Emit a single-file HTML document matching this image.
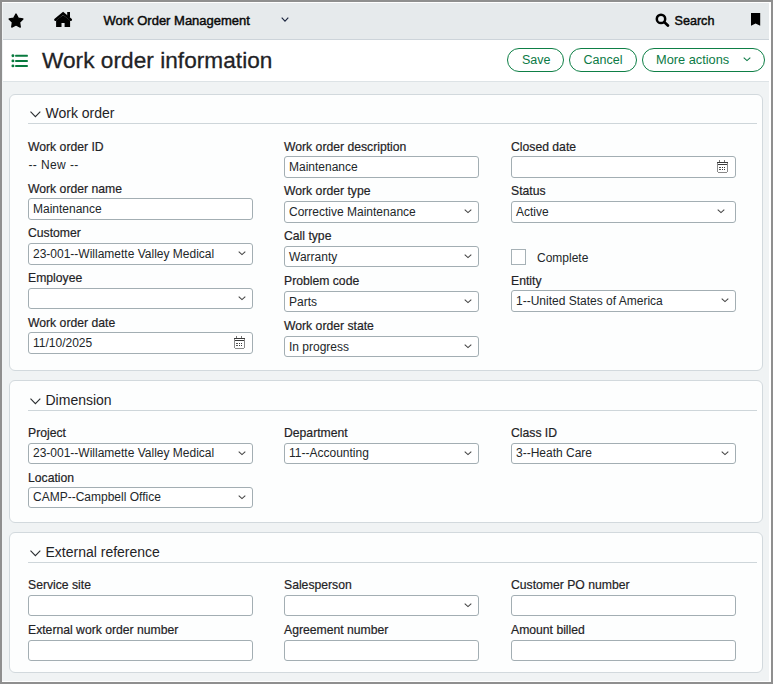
<!DOCTYPE html>
<html><head><meta charset="utf-8">
<style>
*{box-sizing:border-box;margin:0;padding:0}
html,body{width:773px;height:684px;overflow:hidden;background:#8f8f8f;font-family:"Liberation Sans",sans-serif;color:#1f2326}
body{position:relative}
.a{position:absolute;white-space:nowrap}
.lbl{line-height:1.149;-webkit-text-stroke:0.2px #1f2326;color:#1f2326}
.val{line-height:1.149;color:#22272a}
.hd{line-height:1.149;color:#1f2326}
.hdb{line-height:1.149;color:#0a0a0a;-webkit-text-stroke:0.45px #0a0a0a}
.inp{position:absolute;border:1px solid #a3aeb3;border-radius:3px;background:#fff}
.card{position:absolute;background:#fdfefe;border:1px solid #d2d9dd;border-radius:6px}
.rule{position:absolute;height:1px;background:#ced6da}
.btn{position:absolute;border:1.5px solid #0e7f46;border-radius:13px;background:#fff}
.bt{line-height:1.149;color:#0b7a45}
</style></head><body>

<div class="a" style="left:2px;top:2px;width:769px;height:680px;background:#fff"></div>
<div class="a" style="left:3px;top:3px;width:766px;height:678px;background:#f0f3f4"></div>
<div class="a" style="left:2px;top:3px;width:1px;height:678px;background:#f1f4f5"></div>
<div class="a" style="left:3px;top:3px;width:766px;height:36px;background:#e6eaec"></div>
<div class="a" style="left:3px;top:39px;width:766px;height:1px;background:#cdd4da"></div>
<div class="a" style="left:3px;top:40px;width:766px;height:41px;background:#fff"></div>
<div class="a" style="left:3px;top:81px;width:766px;height:1px;background:#dde3e6"></div>
<svg class="a" style="left:0;top:0" width="40" height="40" viewBox="0 0 40 40"><polygon points="16.00,14.00 18.20,18.17 22.85,18.98 19.57,22.36 20.23,27.02 16.00,24.95 11.77,27.02 12.43,22.36 9.15,18.98 13.80,18.17" fill="#000" stroke="#000" stroke-width="1.4" stroke-linejoin="round"/></svg>
<svg class="a" style="left:53px;top:11px" width="20" height="17" viewBox="0 0 20 17"><rect x="14.2" y="1" width="2.8" height="5.5" fill="#000"/><path d="M2.4 8.7 L10.1 2.3 L17.8 8.7" fill="none" stroke="#000" stroke-width="2.5" stroke-linecap="round" stroke-linejoin="miter"/><path d="M3.1 9.5 L10.1 4.1 L17.1 9.5 V16 H11.6 V11.9 H8.5 V16 H3.1 Z" fill="#000"/></svg>
<div class="a hdb" style="left:103.5px;top:14.04px;font-size:13px">Work Order Management</div>
<svg class="a" style="left:280.5px;top:16.6px" width="9" height="6" viewBox="0 0 9 6"><path d="M0.7 0.7 L4 4.1 L7.3 0.7" fill="none" stroke="#1c2640" stroke-width="1.15"/></svg>
<svg class="a" style="left:655px;top:12.8px" width="15" height="14" viewBox="0 0 15 14"><circle cx="6" cy="5.9" r="4.2" fill="none" stroke="#000" stroke-width="2.5"/><path d="M9.2 9.1 L12.9 12.6" stroke="#000" stroke-width="2.7" stroke-linecap="round"/></svg>
<div class="a hdb" style="left:674.5px;top:13.60px;font-size:12.6px">Search</div>
<svg class="a" style="left:751px;top:13.4px" width="10" height="14" viewBox="0 0 10 14"><path d="M0 0 H9.2 V12.8 L4.6 10.5 L0 12.8 Z" fill="#000"/></svg>
<svg class="a" style="left:11px;top:54px" width="18" height="14" viewBox="0 0 18 14"><g fill="#087a3e"><circle cx="1.9" cy="1.8" r="1.45"/><circle cx="1.9" cy="6.9" r="1.45"/><circle cx="1.9" cy="11.9" r="1.45"/><rect x="4.2" y="0.8" width="12.6" height="2" rx=".5"/><rect x="4.2" y="5.9" width="12.6" height="2" rx=".5"/><rect x="4.2" y="10.9" width="12.6" height="2" rx=".5"/></g></svg>
<div class="a hd" style="left:42px;top:47.6px;font-size:22.6px;letter-spacing:0.05px;-webkit-text-stroke:0.3px #1f2326">Work order information</div>
<div class="btn" style="left:507px;top:48px;width:57px;height:24px"></div>
<div class="a bt" style="left:522px;top:52.79px;font-size:12.5px">Save</div>
<div class="btn" style="left:569px;top:48px;width:68px;height:24px"></div>
<div class="a bt" style="left:583.5px;top:52.79px;font-size:12.5px">Cancel</div>
<div class="btn" style="left:642px;top:48px;width:123px;height:24px"></div>
<div class="a bt" style="left:656px;top:52.52px;font-size:12.8px">More actions</div>
<svg class="a" style="left:743px;top:56.6px" width="9" height="5" viewBox="0 0 9 5"><path d="M0.7 0.7 L4 3.6 L7.3 0.7" fill="none" stroke="#0b7a45" stroke-width="1.1"/></svg>
<div class="card" style="left:9px;top:94px;width:754px;height:277px"></div>
<svg class="a" style="left:30px;top:110.9px" width="12" height="7" viewBox="0 0 12 7"><path d="M0.5 0.6 L5.4 5.6 L10.3 0.6" fill="none" stroke="#2a2e31" stroke-width="1.1"/></svg>
<div class="a hd" style="left:45.5px;top:105.13px;font-size:14px">Work order</div>
<div class="rule" style="left:28px;top:123px;width:729px"></div>
<div class="card" style="left:9px;top:380px;width:754px;height:143px"></div>
<svg class="a" style="left:30px;top:397.7px" width="12" height="7" viewBox="0 0 12 7"><path d="M0.5 0.6 L5.4 5.6 L10.3 0.6" fill="none" stroke="#2a2e31" stroke-width="1.1"/></svg>
<div class="a hd" style="left:45.5px;top:391.63px;font-size:14px">Dimension</div>
<div class="rule" style="left:28px;top:410px;width:729px"></div>
<div class="card" style="left:9px;top:532px;width:754px;height:141px"></div>
<svg class="a" style="left:30px;top:549.6999999999999px" width="12" height="7" viewBox="0 0 12 7"><path d="M0.5 0.6 L5.4 5.6 L10.3 0.6" fill="none" stroke="#2a2e31" stroke-width="1.1"/></svg>
<div class="a hd" style="left:45.5px;top:543.63px;font-size:14px">External reference</div>
<div class="rule" style="left:28px;top:562px;width:729px"></div>
<div class="a lbl" style="left:28px;top:139.96px;font-size:12.2px">Work order ID</div>
<div class="a val" style="left:28.5px;top:159.2px;font-size:12px;letter-spacing:0.25px;word-spacing:0.5px">-- New --</div>
<div class="a lbl" style="left:28px;top:181.76px;font-size:12.2px">Work order name</div>
<div class="inp" style="left:28px;top:198px;width:225px;height:22px"></div>
<div class="a val" style="left:33px;top:203.44px;font-size:12px">Maintenance</div>
<div class="a lbl" style="left:28px;top:225.76px;font-size:12.2px">Customer</div>
<div class="inp" style="left:28px;top:243px;width:225px;height:22px"></div>
<div class="a val" style="left:33px;top:248.44px;font-size:12px">23-001--Willamette Valley Medical</div>
<svg class="a" style="left:237.6px;top:250.6px" width="9" height="5" viewBox="0 0 9 5"><path d="M0.7 0.7 L4 3.6 L7.3 0.7" fill="none" stroke="#444" stroke-width="1.1"/></svg>
<div class="a lbl" style="left:28px;top:270.96px;font-size:12.2px">Employee</div>
<div class="inp" style="left:28px;top:288px;width:225px;height:21px"></div>
<svg class="a" style="left:237.6px;top:295.6px" width="9" height="5" viewBox="0 0 9 5"><path d="M0.7 0.7 L4 3.6 L7.3 0.7" fill="none" stroke="#444" stroke-width="1.1"/></svg>
<div class="a lbl" style="left:28px;top:315.66px;font-size:12.2px">Work order date</div>
<div class="inp" style="left:28px;top:332px;width:225px;height:22px"></div>
<div class="a val" style="left:33px;top:337.44px;font-size:12px">11/10/2025</div>
<svg class="a" style="left:234px;top:336px" width="12" height="14" viewBox="0 0 12 14" shape-rendering="crispEdges"><g fill="#3a3a3a"><rect x="0" y="2" width="11" height="1"/><rect x="0" y="4" width="11" height="1"/><rect x="2" y="0" width="1" height="2" fill="#777"/><rect x="7" y="0" width="1" height="2" fill="#777"/><rect x="2" y="7" width="2" height="1" fill="#555"/><rect x="5" y="7" width="1" height="1"/><rect x="7" y="7" width="1" height="1"/><rect x="2" y="9" width="2" height="1" fill="#555"/><rect x="5" y="9" width="1" height="1"/><rect x="7" y="9" width="1" height="1"/></g><g fill="#8a8a8a"><rect x="0" y="3" width="1" height="9"/><rect x="10" y="3" width="1" height="9"/><rect x="1" y="12" width="9" height="1"/></g></svg>
<div class="a lbl" style="left:284px;top:139.76px;font-size:12.2px">Work order description</div>
<div class="inp" style="left:284px;top:156px;width:195px;height:22px"></div>
<div class="a val" style="left:289px;top:161.44px;font-size:12px">Maintenance</div>
<div class="a lbl" style="left:284px;top:183.96px;font-size:12.2px">Work order type</div>
<div class="inp" style="left:284px;top:201px;width:195px;height:22px"></div>
<div class="a val" style="left:289px;top:206.44px;font-size:12px">Corrective Maintenance</div>
<svg class="a" style="left:463.6px;top:208.6px" width="9" height="5" viewBox="0 0 9 5"><path d="M0.7 0.7 L4 3.6 L7.3 0.7" fill="none" stroke="#444" stroke-width="1.1"/></svg>
<div class="a lbl" style="left:284px;top:228.56px;font-size:12.2px">Call type</div>
<div class="inp" style="left:284px;top:246px;width:195px;height:21px"></div>
<div class="a val" style="left:289px;top:250.94px;font-size:12px">Warranty</div>
<svg class="a" style="left:463.6px;top:253.6px" width="9" height="5" viewBox="0 0 9 5"><path d="M0.7 0.7 L4 3.6 L7.3 0.7" fill="none" stroke="#444" stroke-width="1.1"/></svg>
<div class="a lbl" style="left:284px;top:274.46px;font-size:12.2px">Problem code</div>
<div class="inp" style="left:284px;top:291px;width:195px;height:21px"></div>
<div class="a val" style="left:289px;top:295.94px;font-size:12px">Parts</div>
<svg class="a" style="left:463.6px;top:298.6px" width="9" height="5" viewBox="0 0 9 5"><path d="M0.7 0.7 L4 3.6 L7.3 0.7" fill="none" stroke="#444" stroke-width="1.1"/></svg>
<div class="a lbl" style="left:284px;top:319.26px;font-size:12.2px">Work order state</div>
<div class="inp" style="left:284px;top:336px;width:195px;height:21px"></div>
<div class="a val" style="left:289px;top:340.94px;font-size:12px">In progress</div>
<svg class="a" style="left:463.6px;top:343.6px" width="9" height="5" viewBox="0 0 9 5"><path d="M0.7 0.7 L4 3.6 L7.3 0.7" fill="none" stroke="#444" stroke-width="1.1"/></svg>
<div class="a lbl" style="left:511px;top:139.76px;font-size:12.2px">Closed date</div>
<div class="inp" style="left:511px;top:156px;width:225px;height:22px"></div>
<svg class="a" style="left:717px;top:160px" width="12" height="14" viewBox="0 0 12 14" shape-rendering="crispEdges"><g fill="#3a3a3a"><rect x="0" y="2" width="11" height="1"/><rect x="0" y="4" width="11" height="1"/><rect x="2" y="0" width="1" height="2" fill="#777"/><rect x="7" y="0" width="1" height="2" fill="#777"/><rect x="2" y="7" width="2" height="1" fill="#555"/><rect x="5" y="7" width="1" height="1"/><rect x="7" y="7" width="1" height="1"/><rect x="2" y="9" width="2" height="1" fill="#555"/><rect x="5" y="9" width="1" height="1"/><rect x="7" y="9" width="1" height="1"/></g><g fill="#8a8a8a"><rect x="0" y="3" width="1" height="9"/><rect x="10" y="3" width="1" height="9"/><rect x="1" y="12" width="9" height="1"/></g></svg>
<div class="a lbl" style="left:511px;top:183.96px;font-size:12.2px">Status</div>
<div class="inp" style="left:511px;top:201px;width:225px;height:22px"></div>
<div class="a val" style="left:516px;top:206.44px;font-size:12px">Active</div>
<svg class="a" style="left:716.8px;top:208.6px" width="9" height="5" viewBox="0 0 9 5"><path d="M0.7 0.7 L4 3.6 L7.3 0.7" fill="none" stroke="#444" stroke-width="1.1"/></svg>
<div class="a" style="left:511px;top:249px;width:15px;height:16px;border:1px solid #a6b1b6;background:#fff"></div>
<div class="a val" style="left:537px;top:251.64px;font-size:12px">Complete</div>
<div class="a lbl" style="left:511px;top:274.46px;font-size:12.2px">Entity</div>
<div class="inp" style="left:511px;top:290px;width:225px;height:22px"></div>
<div class="a val" style="left:516px;top:295.44px;font-size:12px">1--United States of America</div>
<svg class="a" style="left:721px;top:297.6px" width="9" height="5" viewBox="0 0 9 5"><path d="M0.7 0.7 L4 3.6 L7.3 0.7" fill="none" stroke="#444" stroke-width="1.1"/></svg>
<div class="a lbl" style="left:28px;top:425.66px;font-size:12.2px">Project</div>
<div class="inp" style="left:28px;top:443px;width:225px;height:21px"></div>
<div class="a val" style="left:33px;top:447.44px;font-size:12px">23-001--Willamette Valley Medical</div>
<svg class="a" style="left:237.6px;top:450.6px" width="9" height="5" viewBox="0 0 9 5"><path d="M0.7 0.7 L4 3.6 L7.3 0.7" fill="none" stroke="#444" stroke-width="1.1"/></svg>
<div class="a lbl" style="left:284px;top:425.66px;font-size:12.2px">Department</div>
<div class="inp" style="left:284px;top:443px;width:195px;height:21px"></div>
<div class="a val" style="left:289px;top:447.44px;font-size:12px">11--Accounting</div>
<svg class="a" style="left:463.6px;top:450.6px" width="9" height="5" viewBox="0 0 9 5"><path d="M0.7 0.7 L4 3.6 L7.3 0.7" fill="none" stroke="#444" stroke-width="1.1"/></svg>
<div class="a lbl" style="left:511px;top:425.66px;font-size:12.2px">Class ID</div>
<div class="inp" style="left:511px;top:443px;width:225px;height:21px"></div>
<div class="a val" style="left:516px;top:447.44px;font-size:12px">3--Heath Care</div>
<svg class="a" style="left:720.6px;top:450.6px" width="9" height="5" viewBox="0 0 9 5"><path d="M0.7 0.7 L4 3.6 L7.3 0.7" fill="none" stroke="#444" stroke-width="1.1"/></svg>
<div class="a lbl" style="left:28px;top:470.76px;font-size:12.2px">Location</div>
<div class="inp" style="left:28px;top:487px;width:225px;height:21px"></div>
<div class="a val" style="left:33px;top:491.44px;font-size:12px">CAMP--Campbell Office</div>
<svg class="a" style="left:237.6px;top:494.6px" width="9" height="5" viewBox="0 0 9 5"><path d="M0.7 0.7 L4 3.6 L7.3 0.7" fill="none" stroke="#444" stroke-width="1.1"/></svg>
<div class="a lbl" style="left:28px;top:577.66px;font-size:12.2px">Service site</div>
<div class="inp" style="left:28px;top:595px;width:225px;height:21px"></div>
<div class="a lbl" style="left:284px;top:577.66px;font-size:12.2px">Salesperson</div>
<div class="inp" style="left:284px;top:595px;width:195px;height:21px"></div>
<svg class="a" style="left:463.6px;top:602.6px" width="9" height="5" viewBox="0 0 9 5"><path d="M0.7 0.7 L4 3.6 L7.3 0.7" fill="none" stroke="#444" stroke-width="1.1"/></svg>
<div class="a lbl" style="left:511px;top:577.66px;font-size:12.2px">Customer PO number</div>
<div class="inp" style="left:511px;top:595px;width:225px;height:21px"></div>
<div class="a lbl" style="left:28px;top:622.86px;font-size:12.2px">External work order number</div>
<div class="inp" style="left:28px;top:640px;width:225px;height:21px"></div>
<div class="a lbl" style="left:284px;top:622.86px;font-size:12.2px">Agreement number</div>
<div class="inp" style="left:284px;top:640px;width:195px;height:21px"></div>
<div class="a lbl" style="left:511px;top:622.86px;font-size:12.2px">Amount billed</div>
<div class="inp" style="left:511px;top:640px;width:225px;height:21px"></div>
</body></html>
